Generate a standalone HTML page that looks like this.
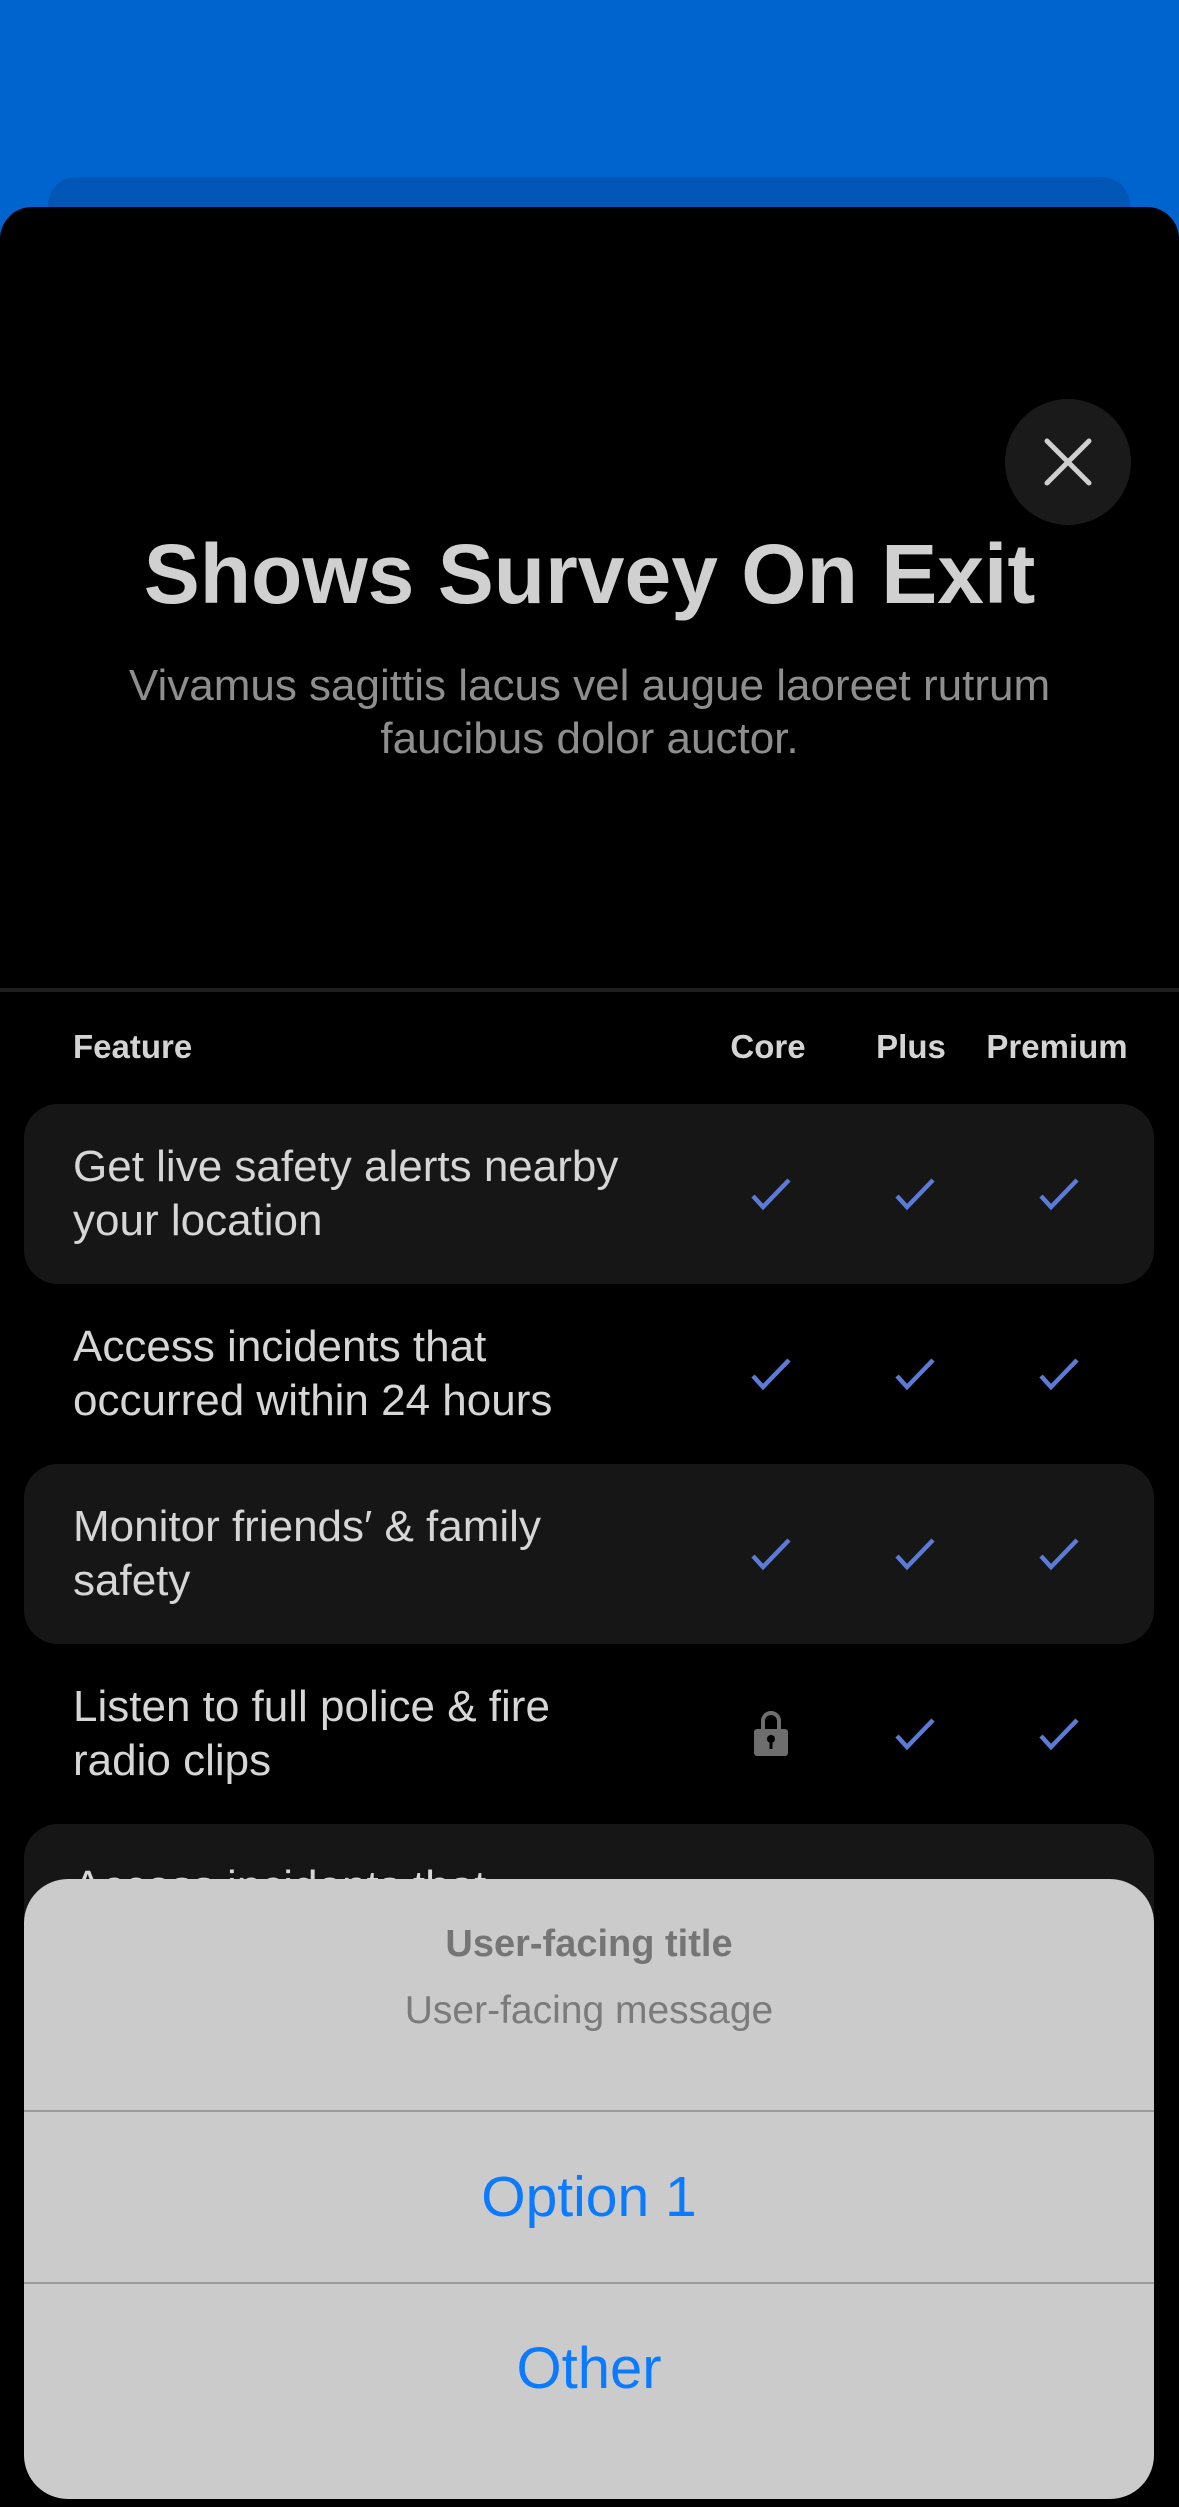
<!DOCTYPE html>
<html><head><meta charset="utf-8"><style>
*{margin:0;padding:0;box-sizing:border-box}
body{width:1179px;height:2454px;overflow:hidden;background:#0064cf;font-family:"Liberation Sans",sans-serif;position:relative}
.card{position:absolute;left:48px;top:177px;width:1082px;height:100px;background:#0257b6;border-radius:28px}
.sheet{position:absolute;left:0;top:207px;width:1179px;height:2300px;background:#000;border-radius:32px 32px 0 0}
.close{position:absolute;left:1005px;top:399px;width:126px;height:126px;border-radius:50%;background:#1a1a1a}
.title{position:absolute;left:0;width:1179px;top:526px;text-align:center;color:#d0d0d0;font-weight:bold;font-size:84px;line-height:96px}
.sub{position:absolute;left:0;width:1179px;top:659px;text-align:center;color:#8e8e8e;font-size:44px;line-height:53px}
.div{position:absolute;left:0;top:988px;width:1179px;height:4px;background:#1e1e1e}
.hdr{position:absolute;top:1029px;font-size:33px;font-weight:bold;color:#d4d4d4;line-height:36px}
.row{position:absolute;left:24px;width:1130px;height:180px;border-radius:34px}
.bg{background:#161616}
.rt{position:absolute;left:49px;top:36px;font-size:44px;line-height:54px;color:#d6d6d6;width:570px}
.alert{position:absolute;left:24px;top:1879px;width:1130px;height:620px;background:#cbcbcb;border-radius:44px}
.at{position:absolute;left:0;width:100%;text-align:center}
</style></head><body>
<div class="card"></div>
<div class="sheet"></div>
<div class="close"><svg width="126" height="126"><path d="M42 42 L84 84 M84 42 L42 84" stroke="#cfcfcf" stroke-width="5" stroke-linecap="round"/></svg></div>
<div class="title">Shows Survey On Exit</div>
<div class="sub">Vivamus sagittis lacus vel augue laoreet rutrum<br>faucibus dolor auctor.</div>
<div class="div"></div>
<div class="hdr" style="left:73px">Feature</div>
<div class="hdr" style="left:718px;width:100px;text-align:center">Core</div>
<div class="hdr" style="left:861px;width:100px;text-align:center">Plus</div>
<div class="hdr" style="left:967px;width:180px;text-align:center">Premium</div>

<div class="row bg" style="top:1104px"><div class="rt">Get live safety alerts nearby your location</div></div>
<div class="row" style="top:1284px"><div class="rt">Access incidents that occurred within 24 hours</div></div>
<div class="row bg" style="top:1464px"><div class="rt">Monitor friends′ &amp; family safety</div></div>
<div class="row" style="top:1644px"><div class="rt">Listen to full police &amp; fire radio clips</div></div>
<div class="row bg" style="top:1824px"><div class="rt">Access incidents that</div></div>

<svg style="position:absolute;left:0;top:0" width="1179" height="2454">
<g stroke="#5b7bd6" stroke-width="4.5" fill="none">
<path d="M753 1196 L763 1207 L789 1180"/><path d="M897 1196 L907 1207 L933 1180"/><path d="M1041 1196 L1051 1207 L1077 1180"/>
<path d="M753 1376 L763 1387 L789 1360"/><path d="M897 1376 L907 1387 L933 1360"/><path d="M1041 1376 L1051 1387 L1077 1360"/>
<path d="M753 1556 L763 1567 L789 1540"/><path d="M897 1556 L907 1567 L933 1540"/><path d="M1041 1556 L1051 1567 L1077 1540"/>
<path d="M897 1736 L907 1747 L933 1720"/><path d="M1041 1736 L1051 1747 L1077 1720"/>
</g>
<path d="M763 1729 V1721 A8 8 0 0 1 779 1721 V1729" stroke="#6e6e6e" stroke-width="4" fill="none"/>
<rect x="754" y="1729" width="34" height="27" rx="3" fill="#6e6e6e"/>
<circle cx="771" cy="1739" r="4" fill="#000"/><rect x="769.5" y="1740" width="3" height="9" fill="#000"/>
</svg>

<div class="alert">
<div class="at" style="top:44px;font-size:38px;font-weight:bold;color:#757575">User-facing title</div>
<div class="at" style="top:110px;font-size:39px;color:#7b7b7b">User-facing message</div>
<div style="position:absolute;left:0;top:231px;width:100%;height:2px;background:#9a9a9a"></div>
<div class="at" style="top:285px;font-size:57px;color:#0a7aff">Option 1</div>
<div style="position:absolute;left:0;top:403px;width:100%;height:2px;background:#9a9a9a"></div>
<div class="at" style="top:456px;font-size:58px;color:#0a7aff">Other</div>
</div>
</body></html>
